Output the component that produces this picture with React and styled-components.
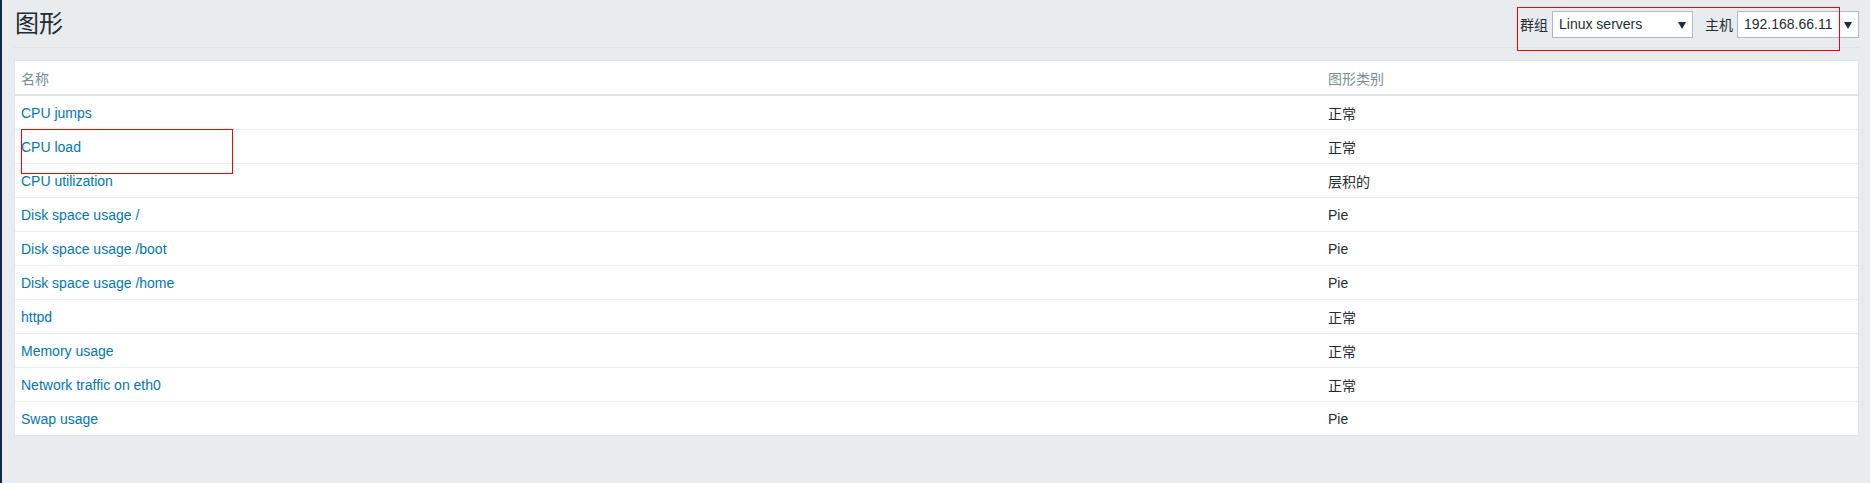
import React from 'react';
import styled, { createGlobalStyle } from 'styled-components';

const GlobalStyle = createGlobalStyle`
  html, body {
    margin: 0;
    padding: 0;
    background: #e9ecef;
    font-family: "Liberation Sans", Arial, "Noto Sans CJK SC", sans-serif;
    font-size: 14px;
    color: #1f2c33;
  }
`;

const Layout = styled.div`
  display: flex;
  min-height: 483px;
  position: relative;
`;

const SideEdge = styled.div`
  width: 2px;
  background: #0e2a44;
  flex-shrink: 0;
`;

const Main = styled.main`
  flex: 1;
  padding: 0 11px 0 12px;
`;

const Header = styled.header`
  height: 47px;
  display: flex;
  align-items: center;
  justify-content: space-between;
  border-bottom: 1px solid #dde2e5;
`;

const Title = styled.h1`
  margin: 0 0 0 1px;
  font-size: 24px;
  font-weight: normal;
  color: #1f2c33;
  line-height: 1;
`;

const Filters = styled.div`
  display: flex;
  align-items: center;
  margin-top: 1px;
`;

const Label = styled.span`
  margin: 0 4px 0 12px;
  font-size: 14px;
`;

const Select = styled.div`
  position: relative;
  box-sizing: border-box;
  width: ${(p) => p.width}px;
  height: 27px;
  display: flex;
  align-items: center;
  padding-left: 6px;
  background: #fff;
  border: 1px solid #acbbc2;
  font-size: 14px;
  color: #1f2c33;
`;

const Arrow = styled.span`
  position: absolute;
  right: 6px;
  top: 10px;
  width: 0;
  height: 0;
  border-left: 4px solid transparent;
  border-right: 4px solid transparent;
  border-top: 7px solid #1f2c33;
`;

const Table = styled.div`
  margin-top: 12px;
  background: #fff;
  border: 1px solid #dfe4e7;
`;

const Row = styled.div`
  display: grid;
  grid-template-columns: 1307px 1fr;
  height: 33px;
  align-items: center;
  border-bottom: ${(p) => (p.head ? '2px solid #dfe4e7' : '1px solid #ebeef0')};
  &:last-child {
    border-bottom: none;
  }
`;

const Cell = styled.div`
  padding-left: 6px;
  color: ${(p) => (p.head ? '#768d99' : '#1f2c33')};
`;

const Link = styled.a`
  color: #0275b8;
  text-decoration: none;
  cursor: pointer;
`;

const Marker = styled.div`
  position: absolute;
  border: 1px solid #ff0000;
  pointer-events: none;
`;

const graphs = [
  ['CPU jumps', '正常'],
  ['CPU load', '正常'],
  ['CPU utilization', '层积的'],
  ['Disk space usage /', 'Pie'],
  ['Disk space usage /boot', 'Pie'],
  ['Disk space usage /home', 'Pie'],
  ['httpd', '正常'],
  ['Memory usage', '正常'],
  ['Network traffic on eth0', '正常'],
  ['Swap usage', 'Pie'],
];

export default function App() {
  return (
    <>
      <GlobalStyle />
      <Layout>
        <SideEdge />
        <Main>
          <Header>
            <Title>图形</Title>
            <Filters>
              <Label>群组</Label>
              <Select width={141}>
                Linux servers
                <Arrow />
              </Select>
              <Label>主机</Label>
              <Select width={122}>
                192.168.66.11
                <Arrow />
              </Select>
            </Filters>
          </Header>
          <Table>
            <Row head>
              <Cell head>名称</Cell>
              <Cell head>图形类别</Cell>
            </Row>
            {graphs.map(([name, type]) => (
              <Row key={name}>
                <Cell>
                  <Link>{name}</Link>
                </Cell>
                <Cell>{type}</Cell>
              </Row>
            ))}
          </Table>
        </Main>
        <Marker style={{ left: 1517, top: 7, width: 321, height: 42 }} />
        <Marker style={{ left: 21, top: 129, width: 210, height: 43 }} />
      </Layout>
    </>
  );
}
